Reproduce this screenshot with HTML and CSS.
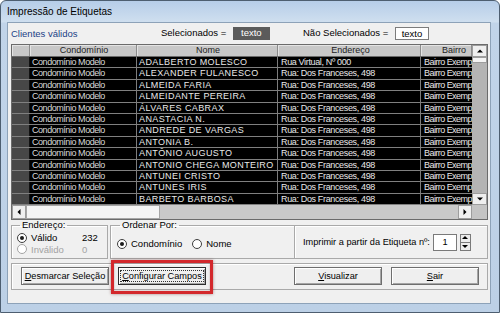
FILE: index.html
```html
<!DOCTYPE html>
<html lang="pt-BR">

<head>
    <meta charset="UTF-8">
    <meta name="viewport" content="width=device-width, initial-scale=1.0">
    <title>Impressão de Etiquetas</title>
    <link rel="stylesheet" href="styles.css">
</head>

<body>
    <div class="window">
        <div class="titlebar">Impressão de Etiquetas</div>
        <div class="client">
            <div class="topline">
                <span class="caption">Clientes válidos</span>
                <span class="counter">Selecionados = <span class="count dark">texto</span></span>
                <span class="counter">Não Selecionados = <span class="count light">texto</span></span>
            </div>

            <div class="grid">
                <div class="grid-main">
                    <div class="grid-view">
                        <div class="row head">
                            <div class="cell sel"></div>
                            <div class="cell c1">Condomínio</div>
                            <div class="cell c2">Nome</div>
                            <div class="cell c3">Endereço</div>
                            <div class="cell c4">Bairro</div>
                        </div>
                        <div class="row">
                            <div class="cell sel"></div>
                            <div class="cell c1">Condomínio Modelo</div>
                            <div class="cell c2">ADALBERTO MOLESCO</div>
                            <div class="cell c3">Rua Virtual, Nº 000</div>
                            <div class="cell c4">Bairro Exemp</div>
                        </div>
                        <div class="row">
                            <div class="cell sel"></div>
                            <div class="cell c1">Condomínio Modelo</div>
                            <div class="cell c2">ALEXANDER FULANESCO</div>
                            <div class="cell c3">Rua: Dos Franceses, 498</div>
                            <div class="cell c4">Bairro Exemp</div>
                        </div>
                        <div class="row">
                            <div class="cell sel"></div>
                            <div class="cell c1">Condomínio Modelo</div>
                            <div class="cell c2">ALMEIDA FARIA</div>
                            <div class="cell c3">Rua: Dos Franceses, 498</div>
                            <div class="cell c4">Bairro Exemp</div>
                        </div>
                        <div class="row">
                            <div class="cell sel"></div>
                            <div class="cell c1">Condomínio Modelo</div>
                            <div class="cell c2">ALMEIDANTE PEREIRA</div>
                            <div class="cell c3">Rua: Dos Franceses, 498</div>
                            <div class="cell c4">Bairro Exemp</div>
                        </div>
                        <div class="row">
                            <div class="cell sel"></div>
                            <div class="cell c1">Condomínio Modelo</div>
                            <div class="cell c2">ÁLVARES CABRAX</div>
                            <div class="cell c3">Rua: Dos Franceses, 498</div>
                            <div class="cell c4">Bairro Exemp</div>
                        </div>
                        <div class="row">
                            <div class="cell sel"></div>
                            <div class="cell c1">Condomínio Modelo</div>
                            <div class="cell c2">ANASTACIA N.</div>
                            <div class="cell c3">Rua: Dos Franceses, 498</div>
                            <div class="cell c4">Bairro Exemp</div>
                        </div>
                        <div class="row">
                            <div class="cell sel"></div>
                            <div class="cell c1">Condomínio Modelo</div>
                            <div class="cell c2">ANDREDE DE VARGAS</div>
                            <div class="cell c3">Rua: Dos Franceses, 498</div>
                            <div class="cell c4">Bairro Exemp</div>
                        </div>
                        <div class="row">
                            <div class="cell sel"></div>
                            <div class="cell c1">Condomínio Modelo</div>
                            <div class="cell c2">ANTONIA B.</div>
                            <div class="cell c3">Rua: Dos Franceses, 498</div>
                            <div class="cell c4">Bairro Exemp</div>
                        </div>
                        <div class="row">
                            <div class="cell sel"></div>
                            <div class="cell c1">Condomínio Modelo</div>
                            <div class="cell c2">ANTÔNIO AUGUSTO</div>
                            <div class="cell c3">Rua: Dos Franceses, 498</div>
                            <div class="cell c4">Bairro Exemp</div>
                        </div>
                        <div class="row">
                            <div class="cell sel"></div>
                            <div class="cell c1">Condomínio Modelo</div>
                            <div class="cell c2">ANTONIO CHEGA MONTEIRO</div>
                            <div class="cell c3">Rua: Dos Franceses, 498</div>
                            <div class="cell c4">Bairro Exemp</div>
                        </div>
                        <div class="row">
                            <div class="cell sel"></div>
                            <div class="cell c1">Condomínio Modelo</div>
                            <div class="cell c2">ANTUNEI CRISTO</div>
                            <div class="cell c3">Rua: Dos Franceses, 498</div>
                            <div class="cell c4">Bairro Exemp</div>
                        </div>
                        <div class="row">
                            <div class="cell sel"></div>
                            <div class="cell c1">Condomínio Modelo</div>
                            <div class="cell c2">ANTUNES IRIS</div>
                            <div class="cell c3">Rua: Dos Franceses, 498</div>
                            <div class="cell c4">Bairro Exemp</div>
                        </div>
                        <div class="row">
                            <div class="cell sel"></div>
                            <div class="cell c1">Condomínio Modelo</div>
                            <div class="cell c2">BARBETO BARBOSA</div>
                            <div class="cell c3">Rua: Dos Franceses, 498</div>
                            <div class="cell c4">Bairro Exemp</div>
                        </div>
                    </div>
                    <div class="vscroll">
                        <div class="sb-btn up"></div>
                        <div class="vthumb"></div>
                        <div class="vtrack"></div>
                        <div class="sb-btn down"></div>
                    </div>
                </div>
                <div class="hscroll">
                    <div class="sb-btn left"></div>
                    <div class="hthumb"></div>
                    <div class="htrack"></div>
                    <div class="sb-btn right"></div>
                    <div class="corner"></div>
                </div>
            </div>

            <div class="groups">
                <fieldset class="group endereco">
                    <legend>Endereço:</legend>
                    <div class="opt">
                        <span class="radio checked"></span>
                        <span class="opt-label">Válido</span>
                        <span class="opt-value">232</span>
                    </div>
                    <div class="opt disabled">
                        <span class="radio"></span>
                        <span class="opt-label">Inválido</span>
                        <span class="opt-value">0</span>
                    </div>
                </fieldset>
                <fieldset class="group ordenar">
                    <legend>Ordenar Por:</legend>
                    <div class="opt-line">
                        <span class="radio checked"></span>
                        <span class="opt-label first">Condomínio</span>
                        <span class="radio"></span>
                        <span class="opt-label">Nome</span>
                    </div>
                </fieldset>
                <div class="group etiqueta">
                    <span>Imprimir a partir da Etiqueta nº:</span>
                    <span class="num-input">1</span>
                    <span class="spinner">
                        <span class="spin up"></span>
                        <span class="spin down"></span>
                    </span>
                </div>
            </div>

            <div class="actions">
                <button class="btn"><u>D</u>esmarcar Seleção</button>
                <button class="btn focused"><span class="focus-ring"><u>C</u>onfigurar Campos</span></button>
                <button class="btn push-right"><u>V</u>isualizar</button>
                <button class="btn"><u>S</u>air</button>
            </div>
        </div>
        <!-- destaque vermelho em volta do botão -->
        <div class="highlight"></div>
    </div>
</body>

</html>
```

FILE: styles.css
```css
* {
    box-sizing: border-box;
}

body {
    margin: 0;
    font-family: "Liberation Sans", Arial, sans-serif;
    font-size: 9px;
    color: #000;
    background: #fff;
}

.window {
    position: relative;
    width: 500px;
    height: 313px;
    display: flex;
    flex-direction: column;
    padding: 0 8px 8px 6px;
    border: 1px solid #4d5e70;
    border-radius: 6px 6px 0 0;
    background: linear-gradient(#b6cde8, #cfdfef 21px, #c1d4e9 22px, #bcd0e6);
}

.titlebar {
    height: 21px;
    line-height: 21px;
    font-size: 10px;
    color: #000;
}

.client {
    height: 282px;
    padding: 0 2px 0 3px;
    background: #f0f0f0;
    border: 1px solid #8da2b8;
}

/* linha de cima */
.topline {
    height: 21px;
    display: grid;
    grid-template-columns: 150px 142px auto;
    align-items: center;
    font-size: 9.5px;
}

.caption {
    color: #213f86;
}

.count {
    display: inline-block;
    height: 13px;
    line-height: 12px;
    margin-left: 4px;
    text-align: center;
    vertical-align: middle;
}

.count.dark {
    width: 37px;
    background: #5b5b5b;
    color: #fff;
}

.count.light {
    width: 34px;
    background: #fff;
    border: 1px solid #7c7c7c;
}

/* grade */
.grid {
    height: 176px;
    border: 1px solid #6b6b6b;
    background: #000;
}

.grid-main {
    height: 160px;
    display: flex;
}

.grid-view {
    width: 460px;
    height: 160px;
    overflow: hidden;
}

.row {
    display: flex;
    height: 11.4px;
    border-bottom: 1px solid #808080;
}

.row.head {
    height: 12px;
    background: #c8c8c8;
    border-bottom: 1px solid #6a6a6a;
}

.cell {
    height: 100%;
    padding-left: 2px;
    overflow: hidden;
    white-space: nowrap;
    line-height: 10.5px;
    color: #e9e9e9;
    border-right: 1px solid #7c7c7c;
}

.cell.sel {
    width: 18px;
    padding: 0;
    background: #474747;
    border-right: 1px solid #111;
}

.cell.c1 {
    width: 107px;
    color: #d9d9d9;
    letter-spacing: -0.45px;
}

.cell.c2 {
    width: 141px;
    letter-spacing: 0.4px;
}

.cell.c3 {
    width: 143px;
    padding-left: 3px;
    letter-spacing: -0.35px;
}

.cell.c4 {
    width: 51px;
    padding-left: 3px;
    border-right: none;
    letter-spacing: -0.55px;
}

.head .cell {
    color: #222;
    text-align: center;
    line-height: 11px;
    letter-spacing: 0;
    border-right: 1px solid #8c8c8c;
    box-shadow: inset 1px 1px #e4e4e4;
}

.head .cell.sel {
    background: #c8c8c8;
}

.head .cell.c4 {
    text-align: right;
    padding-right: 5px;
}

/* barras de rolagem */
.vscroll {
    width: 15px;
    display: flex;
    flex-direction: column;
    background: #b4b4b4;
}

.sb-btn {
    position: relative;
    flex: none;
    background: #efefef;
    border: 1px solid #9d9d9d;
}

.sb-btn::before {
    content: "";
    position: absolute;
    left: 50%;
    top: 50%;
    width: 0;
    height: 0;
    border: 3px solid transparent;
}

.sb-btn.up,
.sb-btn.down {
    height: 12px;
}

.sb-btn.up::before {
    border-bottom: 3px solid #000;
    border-top: none;
    transform: translate(-50%, -50%);
}

.sb-btn.down::before {
    border-top: 3px solid #000;
    border-bottom: none;
    transform: translate(-50%, -50%);
}

.vthumb {
    height: 6px;
    background: #f4f4f4;
    border: 1px solid #9d9d9d;
}

.vtrack {
    flex: 1;
}

.hscroll {
    height: 14px;
    display: flex;
    background: #c9c9c9;
}

.sb-btn.left,
.sb-btn.right {
    width: 14px;
}

.sb-btn.left::before {
    border-right: 3px solid #000;
    border-left: none;
    transform: translate(-50%, -50%);
}

.sb-btn.right::before {
    border-left: 3px solid #000;
    border-right: none;
    transform: translate(-50%, -50%);
}

.hthumb {
    width: 134px;
    background: #f4f4f4;
    border: 1px solid #a5a5a5;
}

.htrack {
    flex: 1;
}

.corner {
    width: 15px;
    background: #c4c4c4;
}

/* grupos de baixo */
.groups {
    display: flex;
    height: 39px;
}

.group {
    margin: 0;
    border: 1px solid #a9a9a9;
    box-shadow: 1px 1px #fff inset;
}

fieldset.group {
    height: 39px;
    padding: 2px 4px 0 5px;
}

.group legend {
    padding: 0 2px;
    margin-left: 3px;
    height: 10px;
    line-height: 10px;
    font-size: 9.5px;
}

.endereco {
    width: 97px;
}

.ordenar {
    width: 185px;
    margin-left: 2px !important;
    padding: 8px 4px 0 6px !important;
}

.etiqueta {
    flex: 1;
    height: 34px;
    margin-top: 5px;
    border-left: none;
    display: flex;
    align-items: center;
    padding-left: 8px;
    font-size: 9.2px;
}

.opt {
    display: flex;
    align-items: center;
    height: 11.5px;
    font-size: 9.5px;
}

.opt-label {
    margin-left: 4px;
    width: 51px;
}

.opt.disabled {
    color: #a3a3a3;
}

.opt-line {
    display: flex;
    align-items: center;
    height: 11px;
    font-size: 9.5px;
}

.opt-line .opt-label {
    width: auto;
}

.opt-line .opt-label.first {
    margin-right: 10px;
}

.radio {
    position: relative;
    flex: none;
    width: 10px;
    height: 10px;
    border-radius: 50%;
    border: 1px solid #3d3d3d;
    background: #fff;
}

.radio.checked::after {
    content: "";
    position: absolute;
    left: 2px;
    top: 2px;
    width: 4px;
    height: 4px;
    border-radius: 50%;
    background: #1b1b1b;
}

.opt.disabled .radio {
    border-color: #a3a3a3;
}

.num-input {
    width: 24px;
    height: 17px;
    margin-left: 3px;
    line-height: 15px;
    text-align: center;
    background: #fff;
    border: 1px solid #7a7a7a;
}

.spinner {
    display: flex;
    flex-direction: column;
    width: 11px;
    height: 17px;
    margin-left: 3px;
    border: 1px solid #7a7a7a;
}

.spin {
    position: relative;
    flex: 1;
    background: #ececec;
}

.spin.up {
    border-bottom: 1px solid #7a7a7a;
}

.spin::before {
    content: "";
    position: absolute;
    left: 1px;
    width: 0;
    height: 0;
    border: 3px solid transparent;
}

.spin.up::before {
    top: 1px;
    border-bottom: 3px solid #000;
    border-top: none;
}

.spin.down::before {
    top: 2px;
    border-top: 3px solid #000;
    border-bottom: none;
}

/* botões */
.actions {
    display: flex;
    height: 27px;
    margin-top: 4px;
    padding: 3px 8px 0 9px;
    border: 1px solid #a9a9a9;
    box-shadow: 1px 1px #fff inset;
    gap: 9px;
}

.btn {
    width: 88px;
    height: 18px;
    padding: 0;
    font-family: "Liberation Sans", Arial, sans-serif;
    font-size: 9.2px;
    color: #000;
    background: #efefef;
    border: 1px solid #6e6e6e;
    box-shadow: inset 1px 1px #fff, inset -1px -1px #a5a5a5;
}

.btn.focused {
    border-color: #2e2e2e;
}

.focus-ring {
    padding: 0 1px;
    border: 1px dotted #333;
}

.push-right {
    margin-left: auto;
}

.highlight {
    position: absolute;
    left: 110px;
    top: 259px;
    width: 102px;
    height: 34px;
    border: 3px solid #d3282c;
    box-shadow: 0 0 3px rgba(80, 0, 0, 0.45), inset 0 0 2px rgba(80, 0, 0, 0.35);
}
```
